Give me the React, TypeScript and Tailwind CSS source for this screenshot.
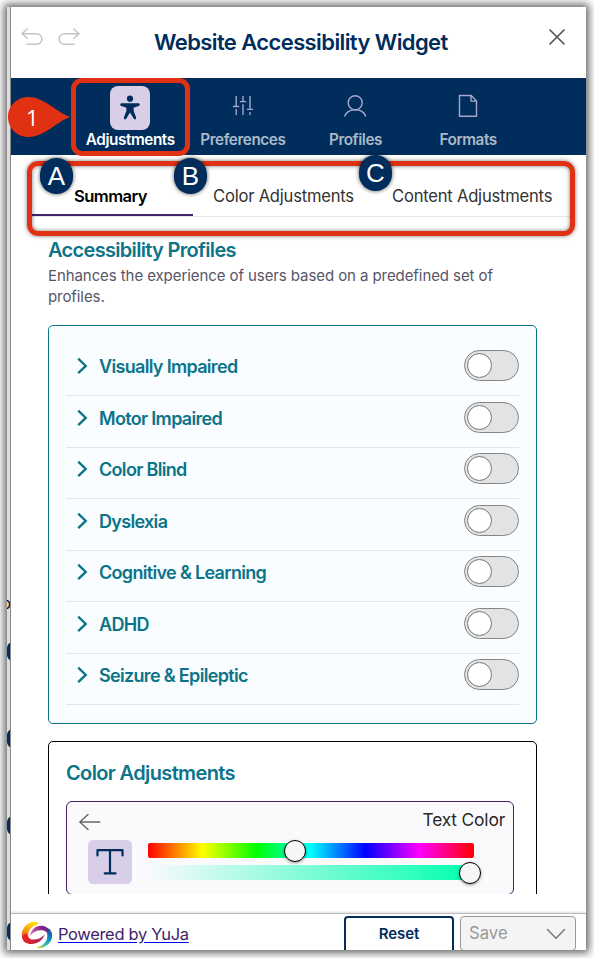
import type { ReactNode } from "react";

const profiles = [
  "Visually Impaired",
  "Motor Impaired",
  "Color Blind",
  "Dyslexia",
  "Cognitive & Learning",
  "ADHD",
  "Seizure & Epileptic",
];

function UndoIcon({ flip = false }: { flip?: boolean }) {
  return (
    <svg width="22" height="18" viewBox="0 0 22 18" fill="none" stroke="#c4c4c4" strokeWidth="1.5" strokeLinecap="round" strokeLinejoin="round" className={flip ? "-scale-x-100" : ""}>
      <path d="M6.2 1 1 5.7l5.2 4.6M1 5.7h14.6a5.2 5.2 0 0 1 0 10.6H6" />
    </svg>
  );
}

function PersonIcon() {
  return (
    <svg width="22" height="26" viewBox="0 0 22 26" fill="#002d5c">
      <circle cx="11" cy="3.7" r="3.1" />
      <path d="M1.2 9.6c0-1 .8-1.6 1.8-1.4h16c1-.2 1.8.4 1.8 1.4 0 .8-.5 1.2-1.2 1.4l-5 1.8v2.9l2.5 6.8c.3.8 0 1.5-.7 1.8-.8.3-1.4 0-1.8-.7L11 17.6l-3.6 6c-.4.7-1 1-1.8.7-.7-.3-1-1-.7-1.8l2.5-6.8v-2.9l-5-1.8c-.7-.2-1.2-.6-1.2-1.4Z" />
    </svg>
  );
}

function SlidersIcon() {
  return (
    <svg width="22" height="22" viewBox="0 0 22 22" fill="none" stroke="#a6a5cb" strokeWidth="1.4" className="-translate-y-0.5">
      <path d="M4.2 1v10M1 11.5h6.2M4.2 14v6M11 1v5.2M7.9 6.6h6.2M11 9.3V20M18 1v13M14.9 14.4h6.2M18 17v3" />
    </svg>
  );
}

function ProfileIcon() {
  return (
    <svg width="24" height="24" viewBox="0 0 24 24" fill="none" stroke="#a6a5cb" strokeWidth="1.4" strokeLinecap="round" className="-translate-y-0.5">
      <circle cx="12.2" cy="8.8" r="7" />
      <path d="M1.8 22C3.2 18.5 7 15.8 12.2 15.8S21.2 18.5 22.6 22" />
    </svg>
  );
}

function FileIcon() {
  return (
    <svg width="20" height="24" viewBox="0 0 20 24" fill="none" stroke="#a6a5cb" strokeWidth="1.4" strokeLinejoin="round" className="-translate-y-0.5">
      <path d="M1.5 1.5h11.7l5.3 5.4v15.4h-17ZM13 1.5v5.6h5.5" />
    </svg>
  );
}

function NavItem({ label, icon, active = false }: { label: string; icon: ReactNode; active?: boolean }) {
  return (
    <button className="flex w-[112.6px] flex-col items-center pt-2">
      <span className={`flex h-11 w-10 items-center justify-center rounded-lg ${active ? "bg-[#d8cee7]" : ""}`}>{icon}</span>
      <span className={`text-[15.3px] leading-[19px] font-semibold tracking-[-0.42px] whitespace-nowrap ${active ? "text-white" : "text-[#aab9c8]"}`}>{label}</span>
    </button>
  );
}

function ProfileRow({ label }: { label: string }) {
  return (
    <li className="flex h-[51.5px] shrink-0 items-start border-b border-[#e1e6e8] pt-[5.5px]">
      <svg width="12" height="18" viewBox="0 0 12 18" fill="none" stroke="#0c7489" strokeWidth="2.3" className="mt-[7px] ml-[11px]">
        <path d="m1.2 1.6 7.6 7.3-7.6 7.3" />
      </svg>
      <span className="ml-[10px] mt-[5px] text-[18px] leading-6 font-semibold tracking-[-0.68px] text-[#0c7489]">{label}</span>
      <span className="ml-auto flex h-[31px] w-[55px] items-center rounded-full border border-[#858585] bg-[#e3e3e3] pl-[2px]">
        <span className="size-[25px] rounded-full border border-[#777] bg-white" />
      </span>
    </li>
  );
}

function Knob({ className }: { className: string }) {
  return <span className={`absolute size-[22px] rounded-full border border-black bg-[#f6f6f6] shadow-[0_1px_3px_#0006] ${className}`} />;
}

function Logo() {
  return (
    <svg width="32" height="28" viewBox="0 0 32 28" fill="none">
      <defs>
        <linearGradient id="warm" x1="12" y1="0" x2="5" y2="23" gradientUnits="userSpaceOnUse">
          <stop stopColor="#ffed00" /><stop offset=".5" stopColor="#f59016" /><stop offset=".9" stopColor="#e31c24" />
        </linearGradient>
        <linearGradient id="crimson" x1="3" y1="20" x2="23" y2="15" gradientUnits="userSpaceOnUse">
          <stop stopColor="#ed2024" /><stop offset="1" stopColor="#9a245f" />
        </linearGradient>
        <linearGradient id="violet" x1="9" y1="15" x2="30" y2="7" gradientUnits="userSpaceOnUse">
          <stop stopColor="#db82b4" /><stop offset=".55" stopColor="#8f278d" /><stop offset="1" stopColor="#4b2684" />
        </linearGradient>
        <linearGradient id="cool" x1="30" y1="6" x2="18" y2="27" gradientUnits="userSpaceOnUse">
          <stop stopColor="#40308c" /><stop offset=".45" stopColor="#078bc9" /><stop offset=".75" stopColor="#39bfae" /><stop offset="1" stopColor="#c7dc23" />
        </linearGradient>
      </defs>
      <path d="M17 1.6C15 .6 12 .3 9.5 1.4 4 3.6.5 8.5.8 14.5 1 18 2.5 20.6 5 22l3.5-4C5 13 9 5 17 3.6Z" fill="url(#warm)" />
      <path d="M1 15c.5 5 5 8.5 10.5 8 6-.6 10.5-4.5 12.3-9.5C20 17.3 16 18.800 12 18.600 8 18.400 6 15.500 5.500 12Z" fill="url(#crimson)" />
      <path d="M9 15C10 8.500 14.500 4.500 20.500 4.700c6 .3 11 5.300 10.500 11.300l-4.500 1C27.500 12.500 25.500 9.500 21 9.200c-5-.2-9 1.800-12 5.800Z" fill="url(#violet)" />
      <path d="M28 7.500C36 16 27 27.500 17.500 27.300c-1.500 0-2-.5-.5-1.200C24 23.500 28 18 26 10.500Z" fill="url(#cool)" />
    </svg>
  );
}

function Marker({ letter, className }: { letter: string; className: string }) {
  return (
    <span className={`absolute flex h-9 w-[33px] items-center justify-center rounded-full bg-[#002d5c] font-['Liberation_Sans',sans-serif] text-[26px] leading-none text-white shadow-[0_0_4px_#000a] ${className}`}>
      {letter}
    </span>
  );
}

export default function App() {
  return (
    <main className="relative h-[958px] w-[594px] overflow-hidden bg-white pt-[7px] pl-[7px] font-['Inter','Liberation_Sans',sans-serif]">
      <div className="flex h-[943px] w-[579px] bg-[#e4e5e7] shadow-[0_0_8px_3px_#0009]">
        <div className="relative w-1 shrink-0 overflow-hidden border-r border-[#888] bg-[#dcddde]">
          <span className="absolute top-[587px] -left-[5px] text-[15px] leading-5">o</span>
          <i className="absolute top-[635px] left-0 h-[19px] w-3 rounded-full bg-[#002d5c]" />
          <i className="absolute top-[722px] left-0 h-[19px] w-3 rounded-full bg-[#002d5c]" />
          <i className="absolute top-[809px] left-0 h-[19px] w-3 rounded-full bg-[#002d5c]" />
          <i className="absolute top-[915px] left-0 h-[19px] w-3 rounded-full bg-[#002d5c]" />
        </div>
        <section className="flex min-w-0 flex-1 flex-col bg-white">
          <header className="flex h-[71px] shrink-0 items-start pt-[21px] pl-[10px]">
            <UndoIcon />
            <span className="ml-[15px]"><UndoIcon flip /></span>
            <h1 className="-mt-px ml-[74px] text-[22px] leading-[30px] font-semibold tracking-[-0.6px] whitespace-nowrap text-[#002d5c]">Website Accessibility Widget</h1>
            <svg width="18" height="18" viewBox="0 0 18 18" fill="none" stroke="#555" strokeWidth="1.7" strokeLinecap="round" className="mr-5 ml-auto">
              <path d="m2 2 14 14M16 2 2 16" />
            </svg>
          </header>

          <nav className="flex h-[77px] shrink-0 bg-[#002d5c] pl-[63px]">
            <NavItem label="Adjustments" icon={<PersonIcon />} active />
            <NavItem label="Preferences" icon={<SlidersIcon />} />
            <NavItem label="Profiles" icon={<ProfileIcon />} />
            <NavItem label="Formats" icon={<FileIcon />} />
          </nav>

          <div className="mr-[15px] ml-[21px] flex h-[62px] shrink-0 border-b border-[#e6e6e8] pt-[26px] text-[16.6px] leading-[30px] tracking-[-0.22px] whitespace-nowrap text-[#333]">
            <div className="flex h-[35px] w-[161px] shrink-0 justify-center border-b-2 border-[#40236b] pr-1 font-semibold tracking-[-0.55px] text-black">Summary</div>
            <div className="ml-5 w-[179px] shrink-0">Color Adjustments</div>
            <div>Content Adjustments</div>
          </div>

          <div className="ml-[37px] flex h-[677px] w-[489px] shrink-0 flex-col overflow-hidden">
            <h2 className="mt-5 text-[20px] leading-[26px] font-semibold tracking-[-0.68px] text-[#0c7489]">Accessibility Profiles</h2>
            <p className="mt-[2px] text-[15px] leading-[21px] tracking-[-0.08px] text-[#575568]">Enhances the experience of users based on a predefined set of<br />profiles.</p>
            <ul className="mt-[18px] flex h-[399px] shrink-0 flex-col rounded-[5px] border border-[#0c7489] bg-[#f9fdff] px-[17px] pt-[18.5px]">
              {profiles.map((p) => <ProfileRow key={p} label={p} />)}
            </ul>
            <div className="mt-[17px] h-[200px] shrink-0 rounded-[5px] border border-black px-[17px] pt-[18px]">
              <h2 className="text-[20px] leading-[26px] font-semibold tracking-[-0.62px] text-[#0c7489]">Color Adjustments</h2>
              <div className="mt-[15px] h-[94px] w-[448px] rounded-[6px] border border-[#40236b] bg-[#fafafd]">
                <div className="flex h-[38px] items-start justify-between pt-[5px] pr-2 pl-3">
                  <svg width="22" height="18" viewBox="0 0 22 18" fill="none" stroke="#666" strokeWidth="1.4" strokeLinecap="round" strokeLinejoin="round" className="mt-[6px]">
                    <path d="M9 1.5.8 9 9 16.5M.8 9h20" />
                  </svg>
                  <span className="text-[17.4px] leading-[26px] tracking-[-0.18px] text-[#292929]">Text Color</span>
                </div>
                <div className="flex pl-[21px]">
                  <span className="flex size-11 items-center justify-center rounded-[5px] bg-[#d8cee7]">
                    <svg width="28" height="26" viewBox="0 0 28 26" fill="none" stroke="#002d5c" strokeWidth="2.2" strokeLinecap="round" strokeLinejoin="round">
                      <path d="M1.5 6.5V1.2h25v5.3M14 1.2v23.2M8.7 24.4h10.8" />
                    </svg>
                  </span>
                  <span className="ml-4 flex w-[326px] flex-col gap-[7px] pt-[3px]">
                    <span className="relative h-[15px] rounded-[2px] bg-[linear-gradient(to_right,#f00,#ff0,#0f0,#0ff,#00f,#f0f,#f00)]"><Knob className="-top-[3px] left-[136px]" /></span>
                    <span className="relative h-[15px] rounded-[2px] bg-[linear-gradient(to_right,#0fb00000,#00ffb0)]"><Knob className="-top-[3px] left-[311px]" /></span>
                  </span>
                </div>
              </div>
            </div>
          </div>

          <footer className="mt-[19px] flex h-[37px] shrink-0 items-start overflow-hidden border-t border-[#bbb] pl-[10px] shadow-[0_-1px_2px_#0002]">
            <span className="mt-[7px]"><Logo /></span>
            <a href="#" className="mt-[7px] ml-[5px] text-[16.5px] leading-[26px] tracking-[-0.34px] text-[#40236b] underline decoration-[#0000ee] underline-offset-2">Powered by YuJa</a>
            <button className="mt-[2px] ml-auto flex h-[42px] w-[110px] shrink-0 justify-center rounded-[4px] border-2 border-[#002d5c] pt-[4px] text-[15px] leading-6 font-semibold tracking-[-0.1px] text-[#002d5c]">Reset</button>
            <button className="mt-[2px] mr-[10px] ml-[6px] flex h-[35px] w-[116px] shrink-0 items-start rounded-[4px] border border-[#999] bg-[#f4f4f4] pt-[3px] pl-2 text-[16.7px] leading-[26px] text-[#999]">
              Save
              <svg width="20" height="12" viewBox="0 0 20 12" fill="none" stroke="#777" strokeWidth="1.4" strokeLinecap="round" className="mt-[8px] mr-[9px] ml-auto"><path d="m1.5 1.5 8.5 8.7 8.5-8.7" /></svg>
            </button>
          </footer>
        </section>
      </div>

      <div className="absolute top-[78px] left-[71px] h-[78px] w-[119px] rounded-[11px] border-[5px] border-[#e03112]" />
      <svg width="64" height="42" viewBox="0 0 64 42" className="absolute top-[96px] left-[7px]">
        <path d="M21 1C10 1 1 10 1 21s9 20 20 20c16 0 27-14 42-20C48 15 37 1 21 1Z" fill="#e03112" />
      </svg>
      <span className="absolute top-[105px] left-[26px] font-['Open_Sans',sans-serif] text-[22px] leading-6 text-white">1</span>
      <div className="absolute top-[161px] left-[27px] h-[75px] w-[548px] rounded-[11px] border-[5px] border-[#e03112] shadow-[0_0_4px_#0008,inset_0_0_4px_#0008]" />
      <Marker letter="A" className="top-[158px] left-[40px]" />
      <Marker letter="B" className="top-[158px] left-[174px]" />
      <Marker letter="C" className="top-[155px] left-[359px]" />
    </main>
  );
}
